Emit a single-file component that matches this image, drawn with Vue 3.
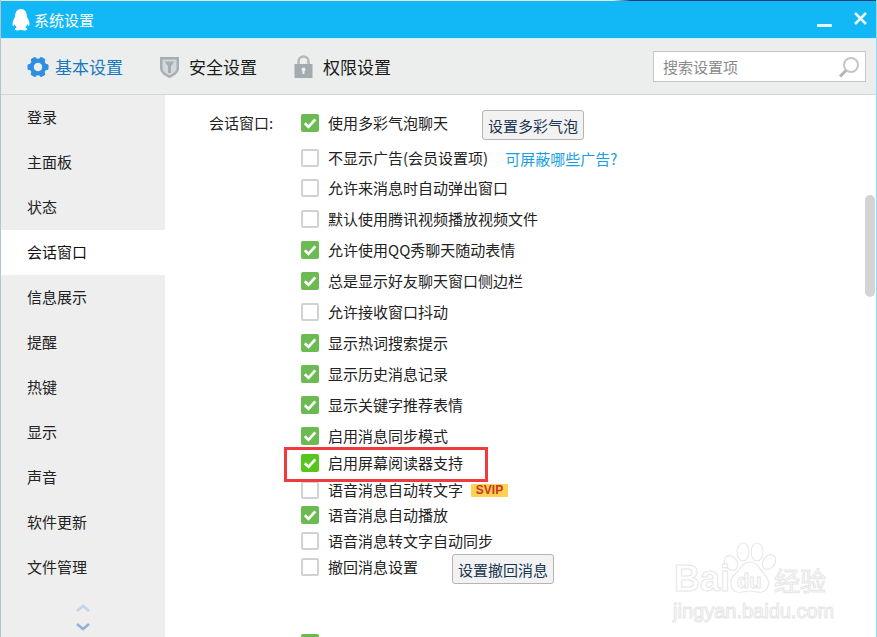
<script setup>
const menu = ['登录', '主面板', '状态', '会话窗口', '信息展示', '提醒', '热键', '显示', '声音', '软件更新', '文件管理']
const rows = [
  { text: '使用多彩气泡聊天', on: true, gap: 0, btn: '设置多彩气泡' },
  { text: '不显示广告(会员设置项)', on: false, gap: 11, link: '可屏蔽哪些广告?' },
  { text: '允许来消息时自动弹出窗口', on: false, gap: 6 },
  { text: '默认使用腾讯视频播放视频文件', on: false, gap: 7 },
  { text: '允许使用QQ秀聊天随动表情', on: true, gap: 7 },
  { text: '总是显示好友聊天窗口侧边栏', on: true, gap: 7 },
  { text: '允许接收窗口抖动', on: false, gap: 7 },
  { text: '显示热词搜索提示', on: true, gap: 7 },
  { text: '显示历史消息记录', on: true, gap: 7 },
  { text: '显示关键字推荐表情', on: true, gap: 7 },
  { text: '启用消息同步模式', on: true, gap: 7 },
  { text: '启用屏幕阅读器支持', on: true, gap: 3, bright: true },
  { text: '语音消息自动转文字', on: false, gap: 3, vip: true },
  { text: '语音消息自动播放', on: true, gap: 1 },
  { text: '语音消息转文字自动同步', on: false, gap: 2 },
  { text: '撤回消息设置', on: false, gap: 2, btn: '设置撤回消息' },
  { text: '显示更多会话窗口设置', on: true, gap: 52, tail: true }
]
const teeth = [0, 60, 120, 180, 240, 300]
</script>

<template>
  <div class="page">
    <div class="edge"></div>
    <header class="titlebar">
      <svg class="penguin" width="18" height="22" viewBox="0 0 18 22">
        <path fill="#fff" d="M9 0C5 0 3.400 3 3.200 6.500 3 8.500 1.400 10.500.8 13c-.5 2-.3 3.800.4 3.900.6.1 1.200-.8 1.600-1.600.3 1.300 1 2.400 1.900 3.200C3.300 19 2.400 19.800 3 20.700 3.800 21.700 7 21.500 9 20.700c2 .8 5.200 1 6 0 .6-.9-.3-1.700-1.700-2.200.9-.8 1.600-1.900 1.900-3.200.4.800 1 1.700 1.600 1.600.7-.1.900-1.900.4-3.900-.6-2.500-2.200-4.500-2.400-6.500C14.600 3 13 0 9 0z"/>
      </svg>
      <span class="title">系统设置</span>
      <span class="spacer"></span>
      <span class="minimize"></span>
      <svg class="close" width="15" height="15" viewBox="0 0 15 15">
        <path d="M2 2l11 11M13 2L2 13" stroke="#e8f8ff" stroke-width="2.600" fill="none"/>
      </svg>
    </header>

    <nav class="toolbar">
      <div class="tab tab-first active">
        <svg width="22" height="22" viewBox="0 0 22 22">
          <rect v-for="a in teeth" :key="a" x="8" y="0.500" width="6" height="6" rx="1.500" fill="#2e8fe2" :transform="`rotate(${a + 30} 11 11)`"/>
          <circle cx="11" cy="11" r="6.400" fill="none" stroke="#2e8fe2" stroke-width="4.200"/>
        </svg>
        <span>基本设置</span>
      </div>
      <div class="tab tab-second">
        <svg width="19" height="22" viewBox="0 0 19 22">
          <path fill="#a8adb1" d="M0 1h19v11c0 5-5 8-9.500 10C5 20 0 17 0 12z"/>
          <path fill="#d5d8da" d="M2.500 3.500h14V12c0 3.500-3.500 5.800-7 7.500-3.500-1.700-7-4-7-7.500z"/>
          <path fill="#a8adb1" d="M4.500 5.500h10L11 10v7H8v-7z"/>
        </svg>
        <span>安全设置</span>
      </div>
      <div class="tab tab-third">
        <svg width="19" height="23" viewBox="0 0 19 23">
          <path fill="none" stroke="#b4b8bb" stroke-width="2.500" d="M4.500 10V6.500a5 5 0 0 1 10 0V10"/>
          <rect x="0.500" y="9" width="18" height="14" fill="#a5aaae"/>
          <circle cx="9.500" cy="14.500" r="2" fill="#eee"/>
          <rect x="8.500" y="15" width="2" height="4" fill="#eee"/>
        </svg>
        <span>权限设置</span>
      </div>
      <span class="spacer"></span>
      <div class="search">
        <span class="search-hint">搜索设置项</span>
        <svg width="22" height="22" viewBox="0 0 22 22">
          <circle cx="13" cy="9" r="7" fill="none" stroke="#c6c6c6" stroke-width="2"/>
          <path d="M8 14.500L2 20.500" stroke="#b4b4b4" stroke-width="3"/>
        </svg>
      </div>
    </nav>

    <div class="body">
      <aside class="sidebar">
        <div v-for="m in menu" :key="m" class="menu-item" :class="{ current: m === '会话窗口' }">{{ m }}</div>
        <div class="arrows">
          <svg width="14" height="8" viewBox="0 0 14 8"><path d="M1 7l6-5 6 5" fill="none" stroke="#c3d4e8" stroke-width="2.500"/></svg>
          <svg width="14" height="8" viewBox="0 0 14 8"><path d="M1 1l6 5 6-5" fill="none" stroke="#8fb1d6" stroke-width="2.500"/></svg>
        </div>
      </aside>

      <main class="content">
        <div class="group-label">会话窗口:</div>
        <div class="rows">
          <div v-for="r in rows" :key="r.text" class="row" :style="{ marginTop: r.gap + 'px' }">
            <span class="box" :class="{ on: r.on, bright: r.bright }">
              <svg v-if="r.on" width="18" height="18" viewBox="0 0 18 18">
                <path d="M3.800 9.200l3.700 3.700 6.800-7.600" fill="none" stroke="#fff" stroke-width="2.700"/>
              </svg>
            </span>
            <span class="label" :class="{ tail: r.tail }">{{ r.text }}</span>
            <button v-if="r.btn" class="action">{{ r.btn }}</button>
            <a v-if="r.link" class="link">{{ r.link }}</a>
            <span v-if="r.vip" class="vip">SVIP</span>
          </div>
        </div>
      </main>

      <div class="thumb"></div>
      <div class="mark"></div>
      <svg class="watermark" width="170" height="90" viewBox="0 0 170 90">
        <g fill="#fff" stroke="#e9e9e9" stroke-width="1.200">
          <ellipse cx="62" cy="22" rx="6" ry="8" transform="rotate(-35 62 22)"/>
          <ellipse cx="74" cy="11" rx="6" ry="9"/>
          <ellipse cx="88" cy="11" rx="6" ry="9"/>
          <ellipse cx="100" cy="21" rx="6" ry="8" transform="rotate(35 100 21)"/>
          <path d="M81 21c8 0 10 8 15 13 5 5 5 15-3 17-5 1-8-1-12-1s-8 2-13 1c-7-2-8-12-3-17 6-5 8-13 16-13z"/>
        </g>
        <text x="5" y="50" class="wm-big">Bai</text>
        <text x="68" y="47" class="wm-du">du</text>
        <text x="105" y="50" class="wm-cn">经验</text>
        <text x="4" y="77" class="wm-url">jingyan.baidu.com</text>
      </svg>
    </div>
  </div>
</template>

<style scoped>
.page {
  position: relative;
  width: 877px;
  height: 637px;
  overflow: hidden;
  display: flex;
  flex-direction: column;
  background: #fff;
  border-left: 1px solid #b4c4cc;
  border-right: 1px solid #8fdcfb;
  box-sizing: border-box;
  font-family: "Noto Sans CJK SC", "Noto Sans", sans-serif;
  color: #222;
}
.edge {
  height: 1px;
  flex: none;
  background: linear-gradient(90deg, #e6e6e6 0 70%, #123a7a 72% 100%);
}
.titlebar {
  flex: none;
  height: 37px;
  background: #12b7f5;
  display: flex;
  align-items: center;
  color: #fff;
  font-size: 15px;
}
.penguin { margin-left: 11px; margin-top: 1px; }
.title { margin-left: 4px; line-height: 37px; }
.spacer { flex: 1; }
.minimize {
  width: 15px;
  height: 3px;
  margin-top: 11px;
  margin-right: 21px;
  background: #e4f6fe;
  border-radius: 1px;
}
.close { margin-right: 8px; margin-top: -2px; }
.toolbar {
  flex: none;
  height: 57px;
  box-sizing: border-box;
  background: #eceeee;
  border-bottom: 1px solid #d2d6d6;
  border-top: 1px solid #cdeffc;
  display: flex;
  align-items: center;
  font-size: 17px;
  color: #1a1a1a;
}
.tab { display: flex; align-items: center; gap: 6px; }
.tab span { line-height: 24px; margin-top: 1px; }
.tab-first { margin-left: 26px; }
.tab-second { margin-left: 37px; gap: 10px; }
.tab-third { margin-left: 37px; gap: 10px; }
.active { color: #1878c0; }
.search {
  width: 213px;
  height: 31px;
  box-sizing: border-box;
  margin-right: 10px;
  margin-top: -1px;
  border: 1px solid #c6c6c6;
  background: #fff;
  display: flex;
  align-items: center;
  justify-content: space-between;
  padding: 0 5px 0 9px;
  font-size: 15px;
  color: #8a8a8a;
}
.search svg { margin-top: 1px; }
.body {
  position: relative;
  flex: 1;
  min-height: 0;
  display: flex;
}
.sidebar {
  flex: none;
  width: 164px;
  background: #eeeeee;
  display: flex;
  flex-direction: column;
  font-size: 15px;
}
.menu-item {
  height: 45px;
  flex: none;
  line-height: 44px;
  padding-left: 26px;
  color: #222;
}
.menu-item.current { background: #fff; color: #111; }
.arrows {
  display: flex;
  flex-direction: column;
  align-items: center;
  gap: 11px;
  margin-top: 14px;
}
.content {
  flex: 1;
  min-width: 0;
  display: flex;
  padding: 16px 0 0 44px;
  font-size: 15px;
}
.group-label {
  width: 92px;
  flex: none;
  line-height: 24px;
}
.rows { flex: 1; display: flex; flex-direction: column; }
.row {
  flex: none;
  height: 24px;
  display: flex;
  align-items: center;
}
.box {
  flex: none;
  width: 18px;
  height: 18px;
  box-sizing: border-box;
  border: 2px solid #d2d2d2;
  border-radius: 2px;
  background: #fff;
  margin-right: 9px;
}
.box.on { background: #6cbb52; border: 0; }
.box.bright { background: #56c61c; }
.box svg { display: block; }
.label { white-space: nowrap; line-height: 24px; }
.label.tail { margin-top: 6px; }
.action {
  flex: none;
  width: 102px;
  height: 30px;
  margin: 4px 0 0 34px;
  padding: 0;
  box-sizing: border-box;
  border: 1px solid #b4b4b4;
  border-radius: 3px;
  background: #f2f2f2;
  font: inherit;
  color: #1a3550;
}
.link { margin-left: 17px; color: #1a9fe0; white-space: nowrap; }
.vip {
  margin-left: 8px;
  width: 37px;
  height: 13px;
  background: #fdd24e;
  border-radius: 1px;
  color: #c9302c;
  font-size: 12px;
  font-weight: 700;
  line-height: 13px;
  text-align: center;
  font-family: "Liberation Sans", sans-serif;
}
.thumb {
  position: absolute;
  left: 864px;
  top: 100px;
  width: 10px;
  height: 102px;
  border-radius: 5px;
  background: #d4d4d4;
}
.mark {
  position: absolute;
  left: 283px;
  top: 352px;
  width: 204px;
  height: 35px;
  box-sizing: border-box;
  border: 3px solid #f03a3e;
}
.watermark {
  position: absolute;
  left: 668px;
  top: 446px;
}
.wm-big, .wm-du, .wm-cn, .wm-url {
  fill: #fff;
  stroke: #e6e6e6;
  stroke-width: 1px;
  font-family: "Liberation Sans", sans-serif;
}
.wm-big { font-size: 36px; font-weight: 700; }
.wm-du { font-size: 20px; font-weight: 700; }
.wm-cn { font-size: 26px; font-family: "Noto Sans CJK SC", sans-serif; }
.wm-url { font-size: 20px; }
</style>

<style>
html, body { margin: 0; overflow: hidden; }
</style>
